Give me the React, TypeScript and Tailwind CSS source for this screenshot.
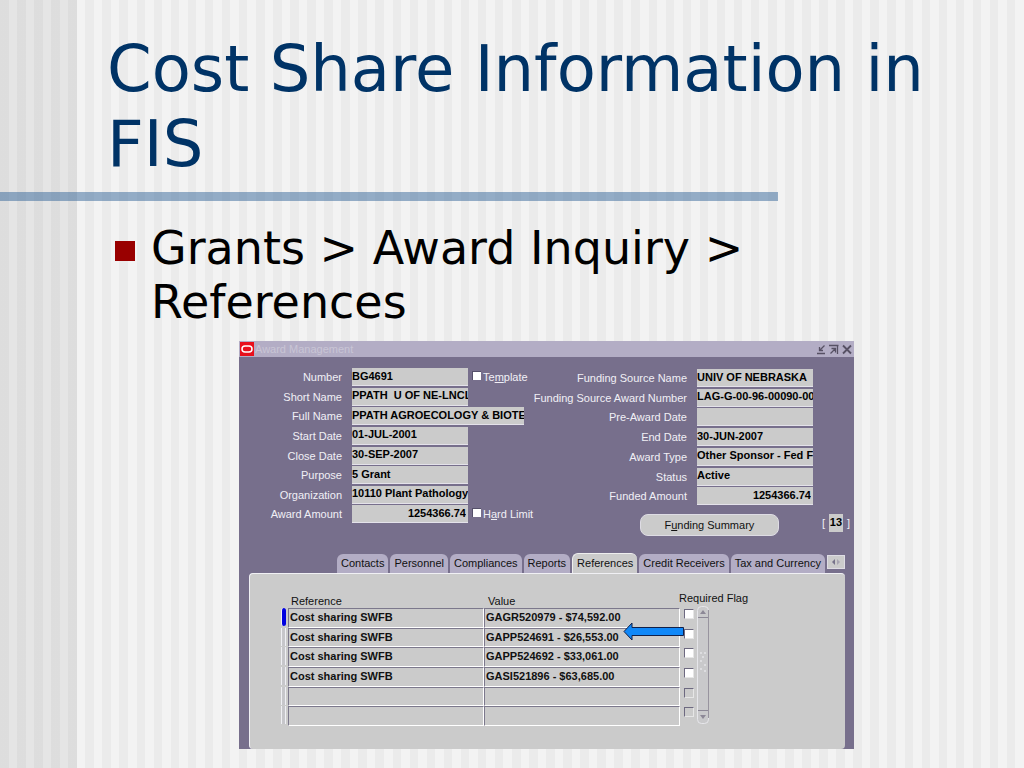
import React from "react";
import clsx from "clsx";

interface Field {
    id: string
    label: string
    value: string
    wide?: boolean
    right?: boolean
    check?: React.ReactNode
}

const awardFields: Field[] = [
    { id: "number", label: "Number", value: "BG4691", check: <>Te<u>m</u>plate</> },
    { id: "short-name", label: "Short Name", value: "PPATH  U OF NE-LNCL" },
    { id: "full-name", label: "Full Name", value: "PPATH AGROECOLOGY & BIOTECH", wide: true },
    { id: "start-date", label: "Start Date", value: "01-JUL-2001" },
    { id: "close-date", label: "Close Date", value: "30-SEP-2007" },
    { id: "purpose", label: "Purpose", value: "5 Grant" },
    { id: "organization", label: "Organization", value: "10110 Plant Pathology" },
    { id: "award-amount", label: "Award Amount", value: "1254366.74", right: true, check: <>H<u>a</u>rd Limit</> },
]

const fundingFields: Field[] = [
    { id: "source-name", label: "Funding Source Name", value: "UNIV OF NEBRASKA" },
    { id: "source-number", label: "Funding Source Award Number", value: "LAG-G-00-96-00090-00" },
    { id: "pre-award", label: "Pre-Award Date", value: "" },
    { id: "end-date", label: "End Date", value: "30-JUN-2007" },
    { id: "award-type", label: "Award Type", value: "Other Sponsor - Fed F" },
    { id: "status", label: "Status", value: "Active" },
    { id: "funded", label: "Funded Amount", value: "1254366.74", right: true },
]

const tabs = ["Contacts", "Personnel", "Compliances", "Reports", "References", "Credit Receivers", "Tax and Currency"]

const references = [
    ["Cost sharing SWFB", "GAGR520979 - $74,592.00"],
    ["Cost sharing SWFB", "GAPP524691 - $26,553.00"],
    ["Cost sharing SWFB", "GAPP524692 - $33,061.00"],
    ["Cost sharing SWFB", "GASI521896 - $63,685.00"],
    ["", ""],
    ["", ""],
]

const FieldRow: React.FC<{ field: Field }> = ({ field }) => (
    <div className="flex items-start min-h-0">
        <label htmlFor={field.id} className="flex-1 pt-[3px] pr-[10px] text-right text-[#f1eff6] whitespace-nowrap">
            {field.label}
        </label>
        <div className="flex w-[116px] h-full">
            <input
                id={field.id}
                readOnly
                defaultValue={field.value}
                className={clsx(
                    "h-[18px] shrink-0 bg-[#cbcbcb] border-b border-[#e4e2ea] pb-[2px] font-bold text-black outline-none whitespace-pre",
                    field.wide ? "w-[172px]" : "w-[116px]",
                    field.right && "text-right pr-[2px]"
                )}
            />
            {field.check && (
                <label className="flex items-start gap-[2px] pl-1 text-[#f1eff6] whitespace-nowrap">
                    <input type="checkbox" className="appearance-none mt-[3px] size-[9px] bg-white border-t border-l border-[#55506a]" />
                    <span className="pt-[3px]">{field.check}</span>
                </label>
            )}
        </div>
    </div>
)

const WindowIcons: React.FC = () => (
    <div className="flex gap-[3px] pr-[2px] text-[#575164]">
        <button aria-label="Minimize">
            <svg width="10" height="11" viewBox="0 0 10 11" fill="none" stroke="currentColor">
                <path d="M1 9.5h8M8.5 1.5L4 6M3.500 3v3.500h3.500" strokeWidth="1.3" />
            </svg>
        </button>
        <button aria-label="Restore">
            <svg width="10" height="11" viewBox="0 0 10 11" fill="none" stroke="currentColor">
                <path d="M0 1.5h9.5M8.5 1v9M1.5 9.5L6 5M2.5 4.5h4v4" strokeWidth="1.3" />
            </svg>
        </button>
        <button aria-label="Close">
            <svg width="10" height="11" viewBox="0 0 10 11" fill="none" stroke="currentColor">
                <path d="M1 1.5l8 8M9 1.5l-8 8" strokeWidth="1.8" />
            </svg>
        </button>
    </div>
)

const ScrollBar: React.FC = () => (
    <svg width="13" height="118" viewBox="0 0 13 118" className="shrink-0 mb-[2px]" aria-hidden="true">
        <rect x="0.5" y="0.5" width="11" height="117" rx="4" fill="#c9c9cb" stroke="#e6e6ea" />
        <path d="M11.5 4v108" stroke="#98949f" />
        <path d="M1 11.5h10M1 104.5h10" stroke="#8c8896" />
        <path d="M3 8l3-4 3 4z" fill="#8c8896" />
        <path d="M3 109l3 4 3-4z" fill="#8c8896" />
        <path d="M3 46h2v2h-2zM7 46h2v2h-2zM5 50h2v2h-2zM3 54h2v2h-2zM7 58h2v2h-2zM3 62h2v2h-2zM7 64h2v2h-2z" fill="#dddde0" />
    </svg>
)

const ReferencesTable: React.FC = () => (
    <div className="relative flex items-end">
        <table className="table-fixed border-separate border-spacing-0 w-[416px] h-[132px] text-left">
            <colgroup>
                <col className="w-[7px]" />
                <col className="w-[196px]" />
                <col className="w-[196px]" />
                <col className="w-[17px]" />
            </colgroup>
            <thead>
                <tr className="h-[14px] leading-[14px]">
                    <th />
                    <th className="p-0 pl-[3px] font-normal">Reference</th>
                    <th className="p-0 pl-1 font-normal">Value</th>
                    <th className="p-0 font-normal whitespace-nowrap align-top">
                        <span className="block -ml-px -mt-[3px]">Required Flag</span>
                    </th>
                </tr>
            </thead>
            <tbody>
                {references.map(([name, value], i) => (
                    <tr key={i} className="leading-4">
                        <td className="p-0 align-top">
                            <div className={clsx("w-[5px] h-[18px] border-l border-[#f0f0f4]", i === 0 ? "bg-[#0000e0] rounded-sm" : "bg-[#c6c6ca] border-r")} />
                        </td>
                        <td className="p-0 pl-px border-l border-r border-t border-[#7c788c] border-b border-b-white border-r-white font-bold align-top">{name}</td>
                        <td className="p-0 pl-px border-l border-r border-t border-[#7c788c] border-b border-b-white border-r-white font-bold align-top">{value}</td>
                        <td className="p-0 pl-1 align-top">
                            <input
                                type="checkbox"
                                aria-label="Required Flag"
                                disabled={i > 3}
                                className={clsx(
                                    "appearance-none block mt-px size-[10px] border border-t-[#6d6980] border-l-[#6d6980] border-r-[#e6e6e6] border-b-[#e6e6e6]",
                                    i > 3 ? "bg-[#cbcbcb]" : "bg-white"
                                )}
                            />
                        </td>
                    </tr>
                ))}
            </tbody>
        </table>
        <ScrollBar />
        <svg width="61" height="19" viewBox="0 0 61 19" className="absolute left-[342px] top-[28px]" aria-hidden="true">
            <path d="M1 9.5L9 1v4.500h51.500v8H9V18z" fill="#1088f8" stroke="#10204a" />
        </svg>
    </div>
)

const AwardWindow: React.FC = () => (
    <section className="w-[615px] bg-[#776f8c] font-['Liberation_Sans',Arial,sans-serif] text-[11px] leading-[13px] text-[#111]">
        <header className="flex items-center justify-between h-4 bg-[#b3adc5]">
            <div className="flex items-center">
                <svg width="15" height="14" viewBox="0 0 15 14" aria-hidden="true">
                    <rect x="1" width="14" height="14" fill="#e8101c" />
                    <rect x="3" y="4" width="10" height="6" rx="3" fill="none" stroke="#fff" strokeWidth="1.500" />
                </svg>
                <span className="pl-px text-[#c9c5d5]">Award Management</span>
            </div>
            <WindowIcons />
        </header>

        <div className="flex pt-[11px]">
            <div className="grid auto-rows-fr w-[229px] h-[157px]">
                {awardFields.map((f) => <FieldRow key={f.id} field={f} />)}
            </div>
            <div className="flex-1 pr-[41px] pt-px">
                <div className="grid auto-rows-fr h-[138px]">
                    {fundingFields.map((f) => <FieldRow key={f.id} field={f} />)}
                </div>
            </div>
        </div>
        <div className="flex items-center justify-end -mt-[11px] h-[22px] pr-1">
            <button className="w-[139px] h-[22px] mr-[43px] rounded-lg bg-[#cbcbcb] border border-[#dedce4]">F<u>u</u>nding Summary</button>
            <div className="flex items-center gap-1 pb-1 text-[#f1eff6]">
                <span>[</span>
                <span className="w-[14px] h-[18px] bg-[#cbcbcb] font-bold text-center text-black leading-4">13</span>
                <span>]</span>
            </div>
        </div>

        <div className="pl-[10px] pr-[9px] pt-[17px]">
            <div role="tablist" className="flex items-end gap-[2px] pl-[88px]">
                {tabs.map((t) => (
                    <button
                        key={t}
                        role="tab"
                        aria-selected={t === "References"}
                        className={clsx(
                            "px-1 rounded-t-md whitespace-nowrap",
                            t === "References" ? "h-5 bg-[#cbcbcb] border-t border-l border-[#eee]" : "h-[19px] bg-[#b3adc5]"
                        )}
                    >
                        {t}
                    </button>
                ))}
                <button aria-label="More tabs" className="flex items-center justify-center self-start shrink-0 mt-[2px] w-[18px] h-[14px] bg-[#cbcbcb] border border-[#dedce4]">
                    <svg width="10" height="6" viewBox="0 0 10 6"><path d="M4 0v6L1 3z" fill="#77738a" /><path d="M6 0v6l3-3z" fill="#a8a5b2" /></svg>
                </button>
            </div>
            <div className="h-[176px] rounded-sm bg-[#cbcbcb] border-t border-l border-[#f0f0f4] pl-[31px] pt-[20px]">
                <ReferencesTable />
            </div>
        </div>
    </section>
)

const App: React.FC = () => (
    <main className="min-h-screen pt-8 pb-5 font-['DejaVu_Sans',Verdana,sans-serif] bg-[linear-gradient(to_right,rgba(0,0,0,0.06)_7.5%,transparent_7.5%),repeating-linear-gradient(to_right,#ebebeb_0,#ebebeb_calc(100%/120),#f3f3f3_calc(100%/120),#f3f3f3_calc(100%/60))]">
        <h1 className="max-w-[1010px] pl-[107px] text-[64px] leading-[75px] text-[#003366]">Cost Share Information in FIS</h1>
        <div className="mt-[10px] w-[76%] h-[9px] bg-[#336699]/50" />
        <ul className="pl-[115px] pt-5">
            <li className="flex gap-4 max-w-[780px] text-[46px] leading-[54px] text-black">
                <span className="mt-[20px] size-5 shrink-0 bg-[#990000]" />
                <span>Grants &gt; Award Inquiry &gt; References</span>
            </li>
        </ul>
        <div className="mt-3 pl-[239px]">
            <AwardWindow />
        </div>
    </main>
)

export default App
